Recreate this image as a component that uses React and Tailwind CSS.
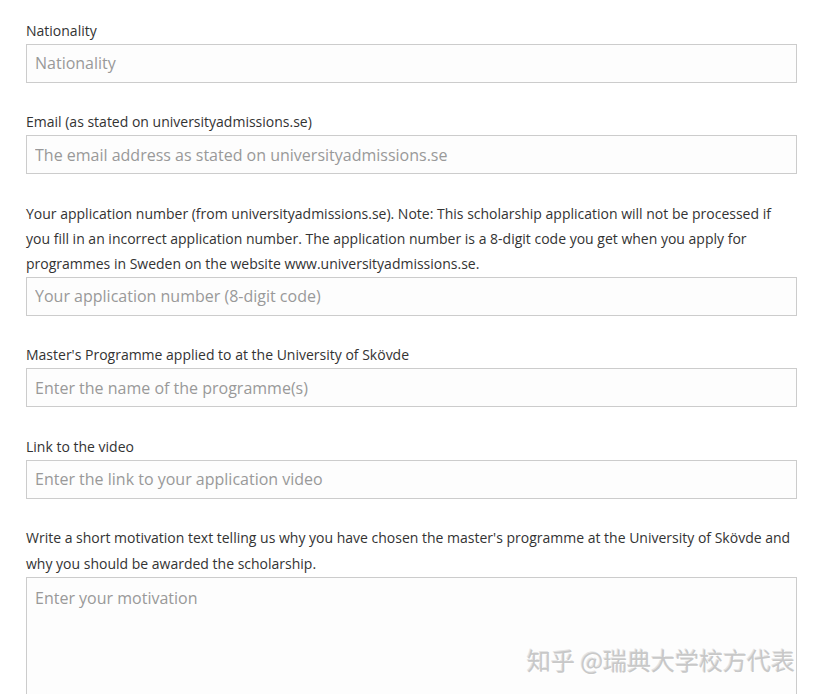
import React from "react";

const font = { fontFamily: '"Open Sans", "Noto Sans", Arial, sans-serif' };

function Field({ label, placeholder }) {
  return (
    <div className="flex flex-col">
      <label className="text-[14px] leading-[25px] text-[#333333] mb-[1px]">{label}</label>
      <input
        type="text"
        placeholder={placeholder}
        className="h-[39px] w-full border border-[#cccccc] bg-[#fdfdfd] px-[8px] text-[16px] text-[#333] placeholder:text-[#999999] outline-none"
        style={font}
      />
    </div>
  );
}

export default function App() {
  return (
    <div className="h-[694px] bg-white overflow-hidden" style={font}>
      <div className="w-[797px] pl-[26px] pt-[17.5px] flex flex-col gap-[26.5px]">
        <Field label="Nationality" placeholder="Nationality" />
        <Field
          label="Email (as stated on universityadmissions.se)"
          placeholder="The email address as stated on universityadmissions.se"
        />
        <Field
          label="Your application number (from universityadmissions.se). Note: This scholarship application will not be processed if you fill in an incorrect application number. The application number is a 8-digit code you get when you apply for programmes in Sweden on the website www.universityadmissions.se."
          placeholder="Your application number (8-digit code)"
        />
        <Field
          label="Master's Programme applied to at the University of Skövde"
          placeholder="Enter the name of the programme(s)"
        />
        <Field label="Link to the video" placeholder="Enter the link to your application video" />
        <div className="flex flex-col relative">
          <label className="text-[14px] leading-[25.5px] text-[#333333] mb-[1px]">
            Write a short motivation text telling us why you have chosen the master's programme at the University of Skövde and why you should be awarded the scholarship.
          </label>
          <textarea
            placeholder="Enter your motivation"
            className="h-[160px] w-full resize-none border border-[#cccccc] bg-[#fdfdfd] px-[8px] py-[9px] text-[16px] leading-[22px] text-[#333] placeholder:text-[#999999] outline-none"
            style={font}
          />
          <div
            className="absolute left-[501px] top-[120px] text-[24px] leading-[30px] text-[#c8c8c8] whitespace-nowrap pointer-events-none"
            style={{ fontFamily: '"Noto Sans CJK SC", "Noto Sans", sans-serif', textShadow: "1px 1px 0 #ffffff, -1px -1px 0 #e4e4e4" }}
          >
            知乎 @瑞典大学校方代表
          </div>
        </div>
      </div>
    </div>
  );
}
